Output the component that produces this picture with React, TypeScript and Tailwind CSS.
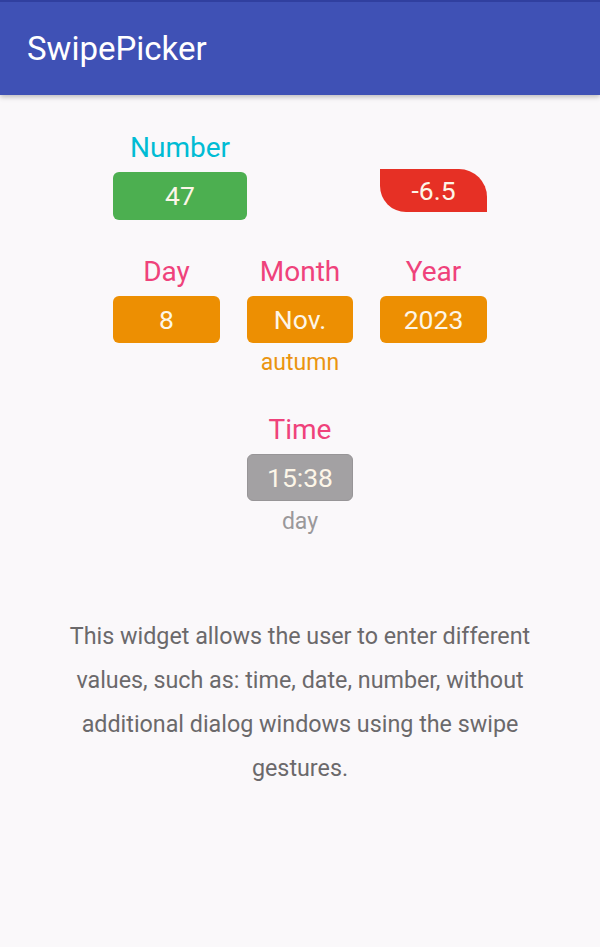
import React from "react";

const box = "h-[47px] rounded-[6px] flex items-center justify-center text-[26.5px] text-[#fdf6e8]";
const label = "text-[28px] text-center leading-[32px] pt-[1px]";

export default function App() {
  return (
    <div className="w-[600px] h-[947px] bg-[#faf8fa] flex flex-col" style={{ fontFamily: "Roboto, 'Noto Sans', sans-serif" }}>
      <div className="h-[95px] bg-[#3f51b5] border-t-2 border-[#303f9f] flex items-center pl-[27px] shadow-[0_2px_5px_rgba(0,0,0,0.25)] relative z-10">
        <span className="text-white text-[33px] leading-none">SwipePicker</span>
      </div>

      <div className="flex flex-col items-center pt-[36px]">
        {/* row 1 */}
        <div className="grid grid-cols-[107px_106px_107px] gap-x-[27px]">
          <div className="col-span-2 flex flex-col w-[134px]">
            <div className={`${label} text-[#00bcd4]`}>Number</div>
            <div className={`${box} mt-[8px] bg-[#4caf50] h-[48px]`}>47</div>
          </div>
          <div className="flex flex-col pt-[38px]">
            <div className="h-[43px] bg-[#e63025] rounded-tr-[28px] rounded-bl-[26px] flex items-center justify-center text-[26.5px] text-[#fdf6e8]">-6.5</div>
          </div>
        </div>

        {/* row 2 */}
        <div className="grid grid-cols-[107px_106px_107px] gap-x-[27px] mt-[35px]">
          <div className="flex flex-col">
            <div className={`${label} text-[#ef427b]`}>Day</div>
            <div className={`${box} mt-[8px] bg-[#ed8f02]`}>8</div>
          </div>
          <div className="flex flex-col">
            <div className={`${label} text-[#ef427b]`}>Month</div>
            <div className={`${box} mt-[8px] bg-[#ed8f02]`}>Nov.</div>
            <div className="text-[23px] text-[#ea9410] text-center leading-[26px] mt-[7px]">autumn</div>
          </div>
          <div className="flex flex-col">
            <div className={`${label} text-[#ef427b]`}>Year</div>
            <div className={`${box} mt-[8px] bg-[#ed8f02]`}>2023</div>
          </div>
        </div>

        {/* row 3 */}
        <div className="flex flex-col w-[106px] mt-[37px]">
          <div className={`${label} text-[#ef427b]`}>Time</div>
          <div className={`${box} mt-[8px] bg-[#a3a1a3] border border-[#979597]`}>15:38</div>
          <div className="text-[23px] text-[#9a989a] text-center leading-[26px] mt-[8px]">day</div>
        </div>

        <p className="mt-[79px] w-[500px] text-center text-[23.3px] leading-[44px] text-[#6b696b]">
          This widget allows the user to enter different values, such as: time, date, number, without additional dialog windows using the swipe gestures.
        </p>
      </div>
    </div>
  );
}
